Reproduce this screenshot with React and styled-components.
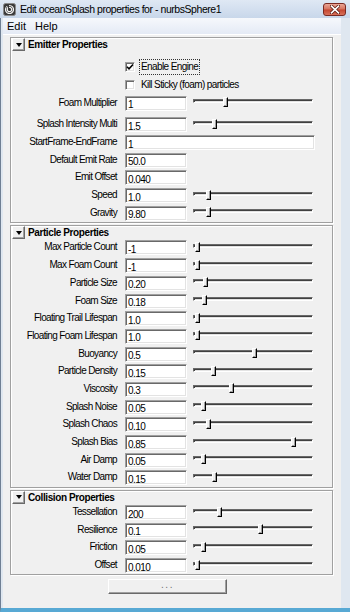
import React from "react";
import styled, { createGlobalStyle } from "styled-components";

const GlobalStyle = createGlobalStyle`
  html, body { margin: 0; padding: 0; background: #f0f0f0; }
  body { font-family: "Liberation Sans", Arial, sans-serif; }
  * { box-sizing: border-box; }
`;

const Window = styled.div`
  width: 350px;
  height: 612px;
  display: flex;
  flex-direction: column;
  overflow: hidden;
  background: #c9d7e8;
`;

const TitleBar = styled.div`
  height: 18px;
  flex: none;
  display: flex;
  align-items: center;
  padding: 0 4px 0 3px;
  background: linear-gradient(#dfe8f4, #c8d7ea);
`;

const Title = styled.div`
  flex: 1;
  margin-left: 4px;
  font-size: 10.5px;
  letter-spacing: -0.45px;
  color: #000;
  white-space: nowrap;
`;

const CloseButton = styled.div`
  width: 23px;
  height: 13px;
  border: 1px solid #7a2a22;
  border-radius: 3px;
  background: linear-gradient(#eaa696, #d5715d 48%, #c4452f 52%, #d8715a);
  display: flex;
  align-items: center;
  justify-content: center;
`;

const Frame = styled.div`
  flex: 1;
  display: flex;
  padding: 0 9px 0 3px;
  border-bottom: 4px solid #58a9d4;
  background: #dfe7f0;
  border-left: 1px solid #6f7f93;
`;

const Client = styled.div`
  flex: 1;
  display: flex;
  flex-direction: column;
  background: #f0f0f0;
  margin-left: -1px;
`;

const MenuBar = styled.div`
  height: 17px;
  flex: none;
  display: flex;
  align-items: center;
  padding-left: 4px;
  gap: 9px;
  background: linear-gradient(#f6f8fc, #e4eaf5);
  border-bottom: 1px solid #fff;
`;

const MenuItem = styled.span`
  font-size: 11px;
  color: #000;
`;

const Content = styled.div`
  flex: 1;
  display: flex;
  flex-direction: column;
  padding: 2px 8px 0 7px;
`;

const Section = styled.div`
  display: flex;
  flex-direction: column;
  border: 1px solid #a0a0a0;
  box-shadow: inset 1px 1px 0 #fff, 1px 1px 0 #fff;
  margin-bottom: ${(p) => p.$gap}px;
`;

const Header = styled.div`
  height: 13px;
  display: flex;
  align-items: center;
  padding-left: 1px;
`;

const TriButton = styled.div`
  width: 13px;
  height: 13px;
  flex: none;
  background: #f0f0f0;
  border: 1px solid;
  border-color: #fff #696969 #696969 #fff;
  box-shadow: inset -1px -1px 0 #a0a0a0;
  display: flex;
  align-items: center;
  justify-content: center;
  &::after {
    content: "";
    border-left: 3.5px solid transparent;
    border-right: 3.5px solid transparent;
    border-top: 4px solid #000;
  }
`;

const HeaderLabel = styled.span`
  margin-left: 3px;
  font-size: 10px;
  font-weight: bold;
  letter-spacing: -0.4px;
  color: #000;
`;

const Body = styled.div`
  display: flex;
  flex-direction: column;
  padding-top: ${(p) => p.$pad || 0}px;
`;

const CheckRow = styled.div`
  height: 18.3px;
  display: flex;
  align-items: center;
  padding-left: 114px;
`;

const CheckBox = styled.div`
  width: 10px;
  height: 10px;
  flex: none;
  background: #fff;
  border: 1px solid;
  border-color: #a0a0a0 #fff #fff #a0a0a0;
  box-shadow: inset 1px 1px 0 #696969, inset -1px -1px 0 #e3e3e3;
  display: flex;
  align-items: center;
  justify-content: center;
`;

const CheckLabel = styled.span`
  margin-left: 4px;
  padding: 1px 1px 2px;
  font-size: 10px;
  letter-spacing: -0.6px;
  color: #000;
  border: 1px dotted ${(p) => (p.$focus ? "#333" : "transparent")};
`;

const Row = styled.div`
  height: 17.7px;
  display: flex;
  align-items: center;
  margin-bottom: ${(p) => p.$mb || 0}px;
`;

const Label = styled.span`
  width: 106px;
  flex: none;
  margin-right: 8px;
  padding-bottom: 2px;
  text-align: right;
  font-size: 10px;
  letter-spacing: -0.65px;
  color: #000;
  white-space: nowrap;
`;

const Field = styled.input`
  width: ${(p) => (p.$wide ? 190 : 62)}px;
  height: 15px;
  flex: none;
  margin: 0;
  padding: 3px 0 0 2px;
  background: #fff;
  border: 1px solid;
  border-color: #a0a0a0 #fff #fff #a0a0a0;
  box-shadow: inset 1px 1px 0 #696969, inset -1px -1px 0 #e3e3e3;
  font-family: "Liberation Sans", Arial, sans-serif;
  font-size: 10px;
  letter-spacing: -0.55px;
  color: #000;
  outline: none;
`;

const Slider = styled.div`
  position: relative;
  width: 120px;
  height: 10px;
  flex: none;
  margin: -2px 0 0 6px;
`;

const Groove = styled.div`
  position: absolute;
  left: 0;
  right: 0;
  top: 2px;
  height: 4px;
  border: 1px solid;
  border-color: #696969 #fff #fff #696969;
  box-shadow: inset 1px 1px 0 #404040;
  background: #e3e3e3;
`;

const Thumb = styled.div`
  position: absolute;
  top: 0;
  width: 5px;
  height: 10px;
  background: #f0f0f0;
  border: 1px solid;
  border-color: #fff #000 #000 #fff;
  box-shadow: inset -1px -1px 0 #a0a0a0;
`;

const FooterButton = styled.div`
  width: 119px;
  height: 15px;
  margin: 4px 0 0 98px;
  display: flex;
  align-items: center;
  justify-content: center;
  background: #f0f0f0;
  border: 1px solid;
  border-color: #fff #696969 #696969 #fff;
  box-shadow: inset -1px -1px 0 #a0a0a0;
  font-size: 10px;
  letter-spacing: 1.5px;
  color: #707070;
  padding-bottom: 4px;
`;

const emitterRows = [
  { label: "Foam Multiplier", value: "1", thumb: 225, mb: 3.7 },
  { label: "Splash Intensity Multi", value: "1.5", thumb: 214 },
  { label: "StartFrame-EndFrame", value: "1", wide: true },
  { label: "Default Emit Rate", value: "50.0" },
  { label: "Emit Offset", value: "0.040" },
  { label: "Speed", value: "1.0", thumb: 208 },
  { label: "Gravity", value: "9.80", thumb: 208 },
];

const particleRows = [
  { label: "Max Particle Count", value: "-1", thumb: 197.5 },
  { label: "Max Foam Count", value: "-1", thumb: 197.5 },
  { label: "Particle Size", value: "0.20", thumb: 205 },
  { label: "Foam Size", value: "0.18", thumb: 204 },
  { label: "Floating Trail Lifespan", value: "1.0", thumb: 197 },
  { label: "Floating Foam Lifespan", value: "1.0", thumb: 197 },
  { label: "Buoyancy", value: "0.5", thumb: 254 },
  { label: "Particle Density", value: "0.15", thumb: 213 },
  { label: "Viscosity", value: "0.3", thumb: 231 },
  { label: "Splash Noise", value: "0.05", thumb: 203 },
  { label: "Splash Chaos", value: "0.10", thumb: 208 },
  { label: "Splash Bias", value: "0.85", thumb: 293 },
  { label: "Air Damp", value: "0.05", thumb: 203 },
  { label: "Water Damp", value: "0.15", thumb: 214 },
];

const collisionRows = [
  { label: "Tessellation", value: "200", thumb: 219 },
  { label: "Resilience", value: "0.1", thumb: 260 },
  { label: "Friction", value: "0.05", thumb: 203 },
  { label: "Offset", value: "0.010", thumb: 197 },
];

const SLIDER_LEFT = 193;

function AttrRow({ label, value, thumb, wide, mb }) {
  return (
    <Row $mb={mb}>
      <Label>{label}</Label>
      <Field readOnly defaultValue={value} $wide={wide} />
      {thumb !== undefined && (
        <Slider>
          <Groove />
          <Thumb style={{ left: thumb - SLIDER_LEFT - 2.5 }} />
        </Slider>
      )}
    </Row>
  );
}

function Panel({ title, gap, children }) {
  return (
    <Section $gap={gap}>
      <Header>
        <TriButton />
        <HeaderLabel>{title}</HeaderLabel>
      </Header>
      {children}
    </Section>
  );
}

const MayaIcon = () => (
  <svg width="13" height="13" viewBox="0 0 13 13">
    <rect x="0.5" y="0.5" width="12" height="12" rx="2" fill="#3a3a3a" stroke="#8a8a8a" />
    <path
      d="M6.5 2.5a4 4 0 1 1-3.6 2.3M6.5 4.3a2.2 2.2 0 1 1-2 1.3"
      fill="none"
      stroke="#f4f4f4"
      strokeWidth="1.2"
      strokeLinecap="round"
    />
    <path d="M3.2 3.4l1.8 1.2" stroke="#f4f4f4" strokeWidth="1" />
  </svg>
);

const CloseX = () => (
  <svg width="10" height="9" viewBox="0 0 10 9">
    <path d="M1.5 1.2L8.5 7.8M8.5 1.2L1.5 7.8" stroke="#5a1a12" strokeWidth="3.2" strokeLinecap="square" />
    <path d="M1.5 1.2L8.5 7.8M8.5 1.2L1.5 7.8" stroke="#fff" strokeWidth="1.6" strokeLinecap="square" />
  </svg>
);

const Check = () => (
  <svg width="8" height="8" viewBox="0 0 8 8">
    <path d="M1 3.8l2 2 4-4.3" fill="none" stroke="#000" strokeWidth="1.6" />
  </svg>
);

export default function App() {
  return (
    <>
      <GlobalStyle />
      <Window>
        <TitleBar>
          <MayaIcon />
          <Title>Edit oceanSplash properties for - nurbsSphere1</Title>
          <CloseButton>
            <CloseX />
          </CloseButton>
        </TitleBar>
        <Frame>
          <Client>
            <MenuBar>
              <MenuItem>Edit</MenuItem>
              <MenuItem>Help</MenuItem>
            </MenuBar>
            <Content>
              <Panel title="Emitter Properties" gap={2}>
                <Body $pad={7}>
                  <CheckRow>
                    <CheckBox>
                      <Check />
                    </CheckBox>
                    <CheckLabel $focus>Enable Engine</CheckLabel>
                  </CheckRow>
                  <CheckRow>
                    <CheckBox />
                    <CheckLabel>Kill Sticky (foam) particles</CheckLabel>
                  </CheckRow>
                  {emitterRows.map((r) => (
                    <AttrRow key={r.label} {...r} />
                  ))}
                </Body>
              </Panel>
              <Panel title="Particle Properties" gap={2}>
                <Body>
                  {particleRows.map((r) => (
                    <AttrRow key={r.label} {...r} />
                  ))}
                </Body>
              </Panel>
              <Panel title="Collision Properties" gap={0}>
                <Body>
                  {collisionRows.map((r) => (
                    <AttrRow key={r.label} {...r} />
                  ))}
                </Body>
              </Panel>
              <FooterButton>...</FooterButton>
            </Content>
          </Client>
        </Frame>
      </Window>
    </>
  );
}
